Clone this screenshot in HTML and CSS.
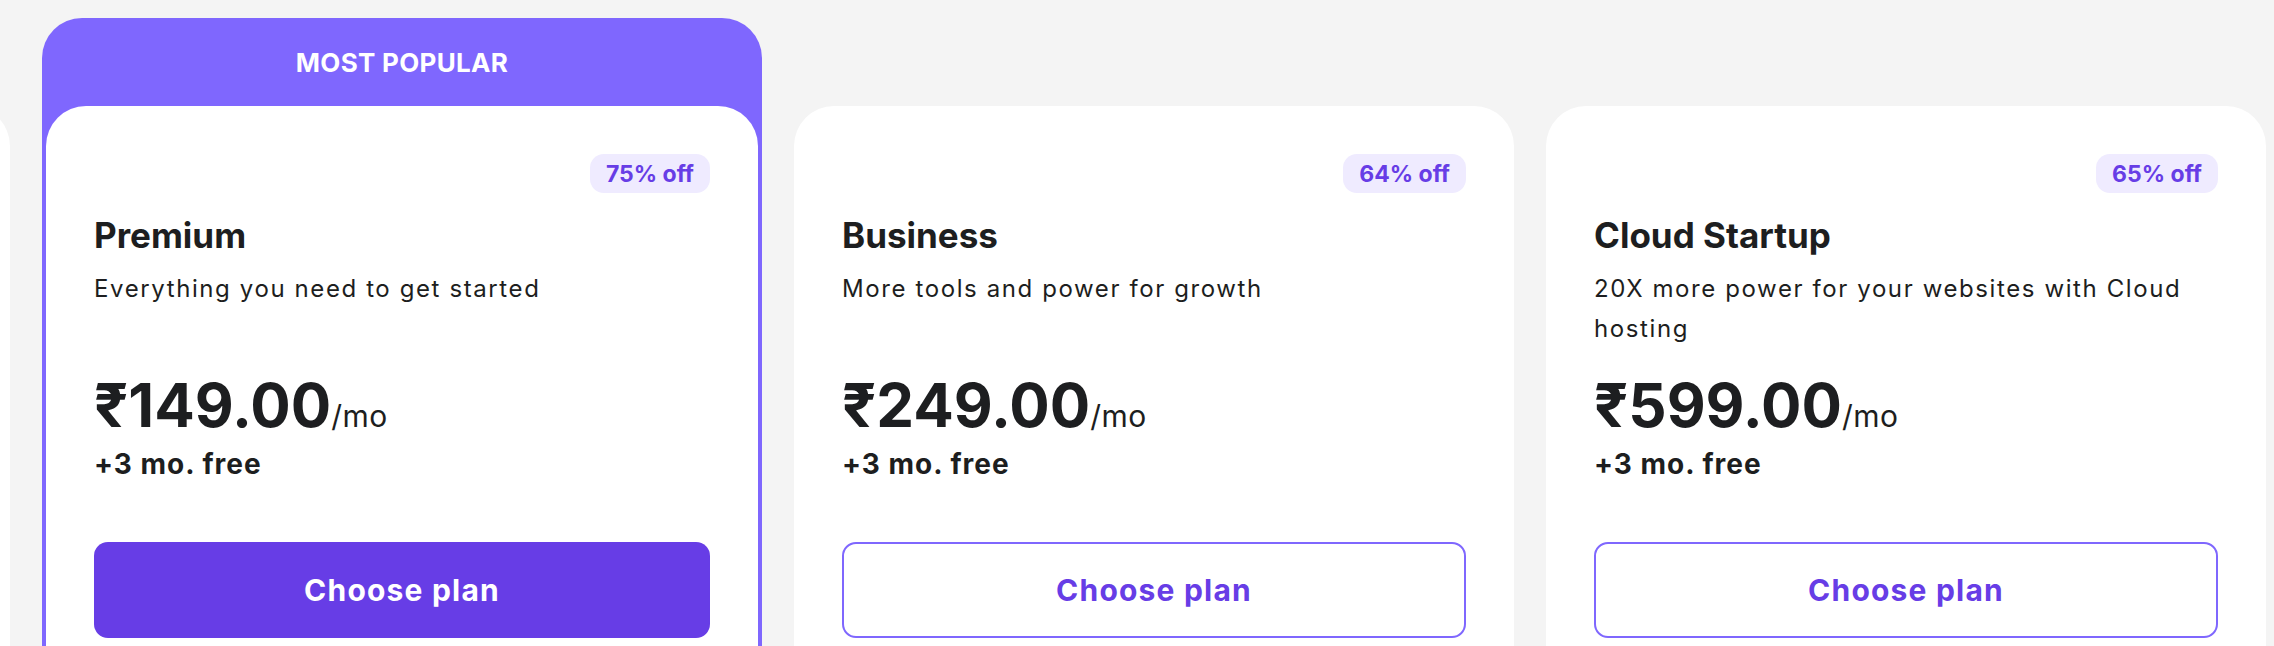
FILE: index.html
```html
<!DOCTYPE html>
<html lang="en">
<head>
<meta charset="utf-8">
<title>Plans</title>
<link rel="stylesheet" href="styles.css">
</head>
<body>
<div class="viewport">
  <div class="track">
    <div class="plan">
      <div class="plan-head"></div>
      <div class="plan-body"></div>
    </div>

    <div class="plan plan--popular">
      <div class="plan-head">MOST POPULAR</div>
      <div class="plan-body">
        <div class="badge-row"><span class="badge">75% off</span></div>
        <h3 class="plan-title">Premium</h3>
        <p class="plan-desc">Everything you need to get started</p>
        <div class="price"><span class="amount">₹149.00</span><span class="per">/mo</span></div>
        <div class="bonus">+3 mo. free</div>
        <button class="btn btn--solid">Choose plan</button>
      </div>
    </div>

    <div class="plan">
      <div class="plan-head"></div>
      <div class="plan-body">
        <div class="badge-row"><span class="badge">64% off</span></div>
        <h3 class="plan-title">Business</h3>
        <p class="plan-desc">More tools and power for growth</p>
        <div class="price"><span class="amount">₹249.00</span><span class="per">/mo</span></div>
        <div class="bonus">+3 mo. free</div>
        <button class="btn btn--outline">Choose plan</button>
      </div>
    </div>

    <div class="plan">
      <div class="plan-head"></div>
      <div class="plan-body">
        <div class="badge-row"><span class="badge">65% off</span></div>
        <h3 class="plan-title">Cloud Startup</h3>
        <p class="plan-desc">20X more power for your websites with Cloud hosting</p>
        <div class="price"><span class="amount">₹599.00</span><span class="per">/mo</span></div>
        <div class="bonus">+3 mo. free</div>
        <button class="btn btn--outline">Choose plan</button>
      </div>
    </div>
  </div>
</div>
</body>
</html>
```

FILE: styles.css
```css
* { box-sizing: border-box; }

html, body {
  margin: 0;
  padding: 0;
  background: #f4f4f4;
}

body {
  font-family: Inter, "Noto Sans", "DejaVu Sans", sans-serif;
  color: #1d1e20;
  width: 2274px;
  height: 646px;
  overflow: hidden;
}

.viewport {
  width: 2274px;
  height: 646px;
  overflow: hidden;
}

.track {
  display: flex;
  gap: 32px;
  padding-top: 18px;
  margin-left: -710px;
}

.plan {
  flex: 0 0 720px;
  display: flex;
  flex-direction: column;
}

.plan-head {
  height: 88px;
  display: flex;
  align-items: center;
  justify-content: center;
  font-size: 26px;
  font-weight: 700;
  color: #ffffff;
  letter-spacing: 0.3px;
}

.plan-body {
  background: #ffffff;
  border-radius: 40px 40px 0 0;
  padding: 48px 48px 0;
  height: 700px;
  display: flex;
  flex-direction: column;
}

.plan--popular {
  background: #7f67fe;
  border-radius: 40px 40px 0 0;
  padding: 0 4px;
}

.plan--popular .plan-body {
  border-radius: 40px 40px 0 0;
}

.badge-row {
  display: flex;
  justify-content: flex-end;
}

.badge {
  height: 39px;
  padding: 0 16px;
  border-radius: 14px;
  background: #efebff;
  color: #673de6;
  font-size: 23px;
  font-weight: 700;
  display: inline-flex;
  align-items: center;
}

.plan-title {
  margin: 20px 0 0;
  font-size: 35px;
  line-height: 44px;
  font-weight: 700;
}

.plan-desc {
  margin: 12px 0 0;
  font-size: 24px;
  line-height: 40px;
  letter-spacing: 1.6px;
  min-height: 80px;
  font-weight: 400;
}

.price {
  margin-top: 20px;
  line-height: 72px;
  height: 72px;
  white-space: nowrap;
}

.amount {
  font-size: 60px;
  font-weight: 700;
}

.per {
  font-size: 30px;
  font-weight: 400;
  letter-spacing: 0.5px;
}

.bonus {
  margin-top: 7px;
  font-size: 28px;
  line-height: 32px;
  letter-spacing: 1px;
  font-weight: 700;
}

.btn {
  margin-top: 62px;
  height: 96px;
  width: 100%;
  border-radius: 14px;
  font-family: inherit;
  font-size: 30px;
  font-weight: 700;
  letter-spacing: 1.2px;
  display: flex;
  align-items: center;
  justify-content: center;
  cursor: pointer;
}

.btn--solid {
  background: #673de6;
  color: #ffffff;
  border: 0;
}

.btn--outline {
  background: #ffffff;
  color: #673de6;
  border: 2px solid #7f67fe;
}
```
